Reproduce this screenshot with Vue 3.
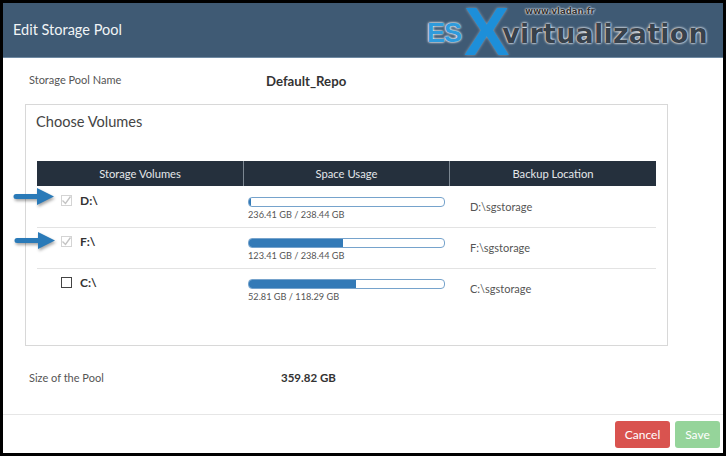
<script setup>
const rows = [
  { name: 'D:\\', used: '236.41 GB / 238.44 GB', pct: 1, loc: 'D:\\sgstorage', disabled: true, arrow: 'arrow-one' },
  { name: 'F:\\', used: '123.41 GB / 238.44 GB', pct: 48, loc: 'F:\\sgstorage', disabled: true, arrow: 'arrow-two' },
  { name: 'C:\\', used: '52.81 GB / 118.29 GB', pct: 55, loc: 'C:\\sgstorage', disabled: false, arrow: '' }
]
</script>

<template>
  <div class="frame">
    <header class="head">
      <h1>Edit Storage Pool</h1>
      <div class="logo">
        <span class="es">ES</span><span class="x">X</span>
        <div class="logo-right">
          <span class="url">www.vladan.fr</span>
          <span class="virt">virtualization</span>
        </div>
      </div>
    </header>

    <main class="body">
      <div class="field name-field">
        <span class="label">Storage Pool Name</span>
        <strong class="name-value">Default_Repo</strong>
      </div>

      <section class="panel">
        <h2>Choose Volumes</h2>
        <div class="table">
          <div class="thead">
            <div>Storage Volumes</div>
            <div>Space Usage</div>
            <div>Backup Location</div>
          </div>
          <div class="tbody">
            <div v-for="r in rows" :key="r.name" class="row">
              <div class="vol">
                <svg v-if="r.arrow" class="arrow" :class="r.arrow" width="41" height="17" viewBox="0 0 41 17">
                  <path d="M3 6h21V0l17 8.500-17 8.500v-6H3a2.500 2.500 0 0 1 0-5z" fill="#2a7ab8" />
                </svg>
                <span class="check" :class="{ off: r.disabled }">
                  <svg v-if="r.disabled" width="11" height="11" viewBox="0 0 11 11">
                    <path d="M1.500 5.500l3 3 5-7" fill="none" stroke="#c4c4c4" stroke-width="1.400" />
                  </svg>
                </span>
                <b>{{ r.name }}</b>
              </div>
              <div class="usage">
                <div class="bar"><div class="fill" :style="{ width: r.pct + '%' }"></div></div>
                <div class="used">{{ r.used }}</div>
              </div>
              <div class="loc">{{ r.loc }}</div>
            </div>
          </div>
        </div>
      </section>

      <div class="field size-field">
        <span class="label">Size of the Pool</span>
        <strong class="size-value">359.82 GB</strong>
      </div>
    </main>

    <footer class="foot">
      <button class="btn cancel">Cancel</button>
      <button class="btn save">Save</button>
    </footer>
  </div>
</template>

<style>
html, body { margin: 0; background: #000; }
</style>

<style scoped>
.frame {
  box-sizing: border-box;
  width: 726px;
  height: 456px;
  border: 3px solid #000;
  background: #fff;
  display: flex;
  flex-direction: column;
  overflow: hidden;
  font-family: Lato, "Liberation Sans", sans-serif;
  color: #444;
}
.head {
  height: 55px;
  flex: none;
  background: #3f5a74;
  border-bottom: 1px solid #6f8aa3;
  box-sizing: border-box;
  display: flex;
  justify-content: space-between;
  padding: 0 15px 0 10px;
  color: #f1f4f6;
}
h1 {
  margin: 17px 0 0;
  font-size: 14.500px;
  line-height: 20px;
  font-weight: 400;
}
.logo {
  flex: none;
  display: flex;
  align-items: flex-start;
  height: 54px;
  font-family: "DejaVu Sans", sans-serif;
}
.es {
  margin-top: 14px;
  font-size: 27px;
  line-height: 32px;
  font-weight: 700;
  letter-spacing: -1px;
  font-family: "Liberation Sans", sans-serif;
  color: #2f9bdc;
  text-shadow: 0 0 3px #fff, 0 0 2px #fff;
}
.x {
  margin: 1px 0 0 3px;
  font-size: 68px;
  line-height: 54px;
  font-weight: 700;
  font-family: "Liberation Sans", sans-serif;
  color: #1d8fd9;
  text-shadow: 0 0 3px rgba(255, 255, 255, 0.45);
}
.logo-right {
  display: flex;
  flex-direction: column;
  position: relative;
  margin-left: -7px;
}
.url {
  margin: 3px 0 0 23px;
  font-size: 8.500px;
  line-height: 10px;
  font-weight: 700;
  color: #333;
  text-shadow: 0 0 2px #fff, 0 0 2px #fff;
}
.virt {
  margin-top: 5px;
  font-size: 27px;
  line-height: 26px;
  font-weight: 700;
  letter-spacing: 0.2px;
  color: #38424c;
  text-shadow: 0 0 3px #fff, 0 0 2px #fff;
}
.body {
  flex: 1;
  display: flex;
  flex-direction: column;
  border-bottom: 1px solid #e6e6e6;
}
.field { display: flex; font-size: 11px; }
.label { width: 262px; padding-left: 26px; box-sizing: border-box; color: #555; }
.name-field { margin-top: 14px; height: 32px; align-items: flex-start; line-height: 16px; }
.name-value { margin: 1px 0 0 1px; font-size: 13.200px; line-height: 16px; color: #333; font-weight: 700; }
.panel {
  box-sizing: border-box;
  width: 643px;
  height: 242px;
  margin-left: 22px;
  border: 1px solid #d8d8d8;
  padding: 7px 10px 0 11px;
}
h2 {
  margin: 0 0 30px -1px;
  font-size: 14.600px;
  line-height: 19px;
  font-weight: 400;
  color: #444;
}
.table { width: 619px; }
.thead, .row {
  display: grid;
  grid-template-columns: 206px 206px 207px;
}
.thead {
  height: 25px;
  background: #25303d;
  color: #e4e7ea;
  font-size: 11.200px;
  line-height: 25px;
  text-align: center;
}
.thead div + div { border-left: 1px solid #7c8792; }
.tbody { padding-top: 1px; }
.row {
  height: 41px;
  box-sizing: border-box;
  border-bottom: 1px solid #e3e3e3;
  position: relative;
}
.row:last-child { border-bottom: 0; }
.vol {
  display: flex;
  align-items: flex-start;
  padding: 7px 0 0 24px;
  font-size: 12px;
  line-height: 14px;
  color: #333;
}
.check {
  box-sizing: border-box;
  width: 11px;
  height: 11px;
  border: 1px solid #444;
  margin: 1px 8px 0 0;
  display: flex;
  align-items: center;
  justify-content: center;
  background: #fff;
  flex: none;
}
.check.off { border-color: #d4d4d4; }
.check svg { flex: none; }
.arrow {
  position: absolute;
  left: -24px;
  top: 1px;
  filter: drop-shadow(1px 2px 1.500px rgba(0, 0, 0, 0.35));
}
.arrow-two { left: -23px; top: 4px; }
.usage { padding: 10px 0 0 5px; }
.bar {
  box-sizing: border-box;
  width: 197px;
  height: 10px;
  border: 1px solid #76a3cc;
  border-radius: 4px;
  overflow: hidden;
  background: #fff;
}
.fill { height: 100%; background: #337ab7; }
.used { font-size: 9.200px; line-height: 13px; margin-top: 1px; color: #555; }
.loc { padding: 13px 0 0 21px; font-size: 11px; line-height: 14px; color: #555; }
.size-field { margin-top: 24px; line-height: 15px; }
.size-value { font-size: 11.500px; color: #333; font-weight: 700; margin-left: 16px; }
.foot {
  flex: none;
  height: 38px;
  box-sizing: border-box;
  padding: 6px 3px 0 0;
  display: flex;
  justify-content: flex-end;
  gap: 5px;
}
.btn {
  height: 27px;
  border: 0;
  border-radius: 3px;
  color: #fff;
  font-family: inherit;
  font-size: 12px;
  padding: 0;
}
.cancel { width: 55px; background: #d9534f; }
.save { width: 45px; background: #95d49a; }
</style>
